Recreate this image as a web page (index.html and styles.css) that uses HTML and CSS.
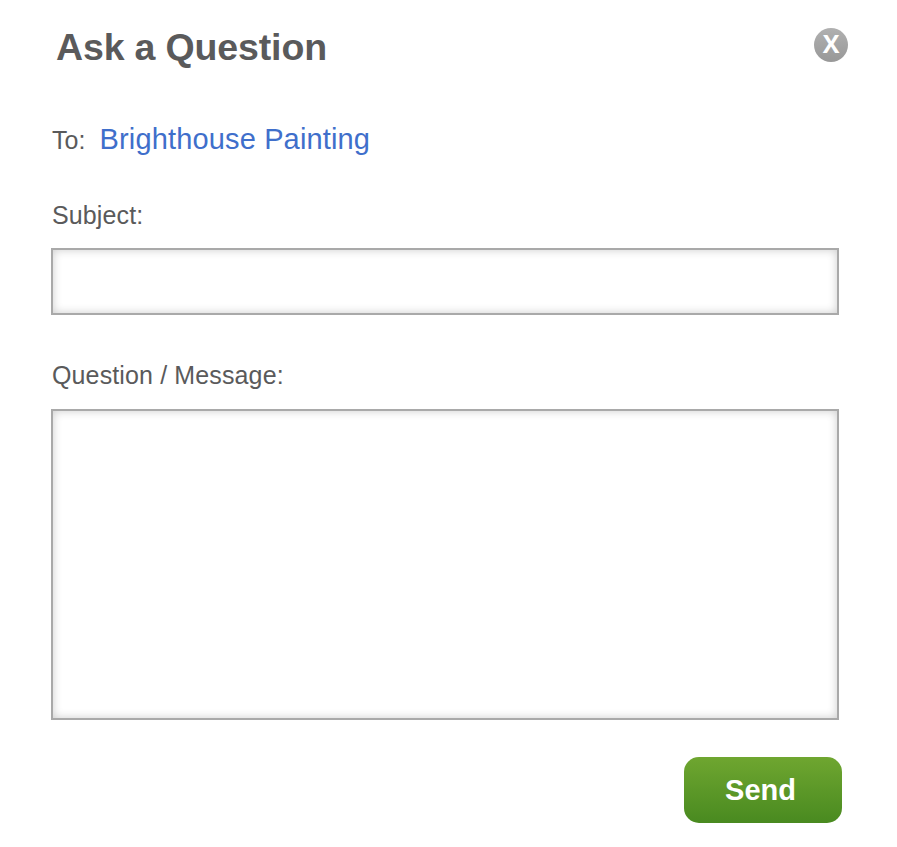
FILE: index.html
```html
<!DOCTYPE html>
<html lang="en">
<head>
<meta charset="utf-8">
<title>Ask a Question</title>
<link rel="stylesheet" href="styles.css">
</head>
<body>
<form class="dialog">
  <header class="header">
    <h1 class="title"><span>Ask a Question</span></h1>
    <button class="close" type="button" aria-label="Close"><span class="close-mark">X</span></button>
  </header>
  <p class="recipient"><span class="to">To:</span><a class="name" href="#">Brighthouse Painting</a></p>
  <label class="label" for="subject">Subject:</label>
  <input class="field subject" id="subject" type="text">
  <label class="label message-label" for="message">Question / Message:</label>
  <textarea class="field message" id="message"></textarea>
  <button class="send" type="button"><span>Send</span></button>
</form>
</body>
</html>
```

FILE: styles.css
```css
* { box-sizing: border-box; }
body {
  margin: 0;
  background: #fff;
  color: #5a5a5b;
  font-family: "Liberation Sans", Arial, sans-serif;
}
.dialog {
  display: flex;
  flex-direction: column;
  width: 897px;
  height: 847px;
  padding: 25px 49px 24px 51px;
}
.header {
  display: flex;
  justify-content: space-between;
  height: 44px;
  padding-left: 5px;
}
.title {
  margin: 0;
  font-size: 37.5px;
  line-height: 44px;
  letter-spacing: -.15px;
  white-space: nowrap;
}
.close {
  width: 34px;
  height: 34px;
  margin-top: 3px;
  padding: 0 0 3px;
  border: 0;
  border-radius: 50%;
  background: linear-gradient(#b0b0b0, #989898);
  color: #fff;
  font: bold 25px/31px "Open Sans", Arial, sans-serif;
}
.recipient {
  display: flex;
  align-items: baseline;
  height: 36px;
  margin: 52px 0 0 1px;
  line-height: 36px;
  white-space: nowrap;
}
.to { width: 47.5px; font-size: 25px; }
.name {
  color: #3f6fcb;
  font-size: 29px;
  letter-spacing: .15px;
  text-decoration: none;
}
.label {
  height: 30px;
  margin: 43px 0 0 1px;
  font-size: 25px;
  line-height: 30px;
  letter-spacing: .13px;
}
.field {
  width: 788px;
  border: 2px solid #a9a9a9;
  border-radius: 0;
  padding: 10px;
  background: #fff;
  box-shadow: inset 0 0 10px rgba(0, 0, 0, .2);
  outline: 0;
  resize: none;
  font: 25px "Liberation Sans", Arial, sans-serif;
}
.subject { height: 67px; margin-top: 18px; }
.message-label { margin-top: 45px; }
.message { height: 311px; margin-top: 19px; }
.send {
  align-self: flex-end;
  width: 158px;
  height: 66px;
  margin: 37px 6px 0 0;
  padding: 0 5px 0 0;
  border: 0;
  border-radius: 15px;
  background: linear-gradient(#6fa630, #498a20);
  color: #fff;
  font: bold 29px/66px "Liberation Sans", Arial, sans-serif;
}
```
